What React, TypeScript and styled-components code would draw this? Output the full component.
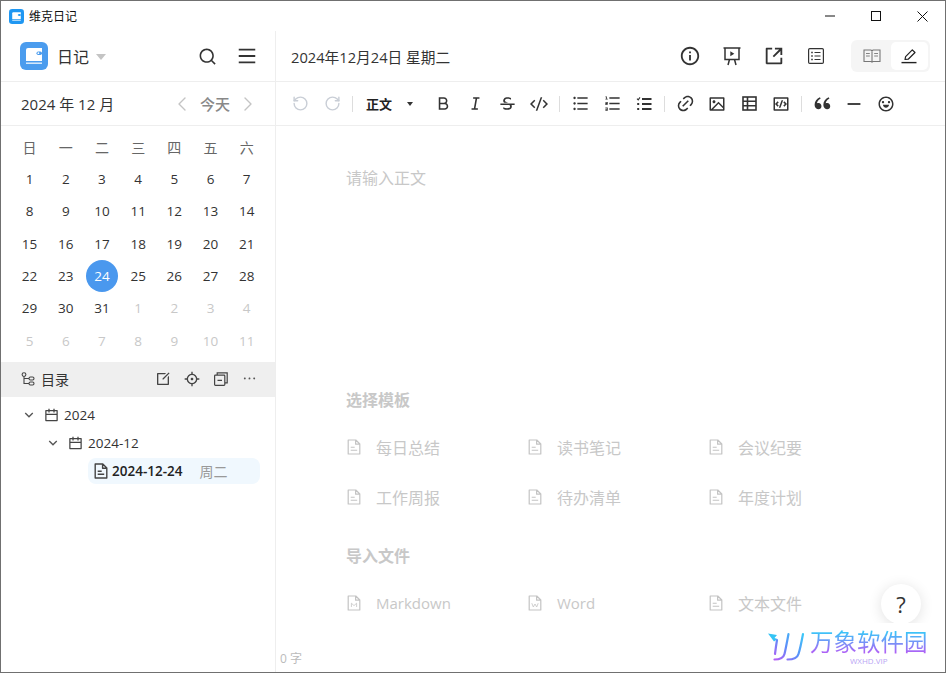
import React from "react"
import styled, { createGlobalStyle } from "styled-components"
import { RotateCcw, RotateCw, ChevronLeft, ChevronRight } from "lucide-react"
import {
  RiBold, RiItalic, RiStrikethrough, RiCodeSSlashLine, RiListUnordered, RiListOrdered,
  RiLink, RiImageLine, RiCodeBoxLine, RiDoubleQuotesL, RiSubtractLine,
  RiEmotionLine, RiInformationLine, RiShareBoxLine, RiSearchLine, RiMenuLine, RiCalendarLine,
  RiEditBoxLine, RiFocus3Line, RiArrowDownSLine, RiMoreLine,
} from "react-icons/ri"

const GlobalStyle = createGlobalStyle`
  html, body {
    margin: 0;
    padding: 0;
    background: #fff;
    overflow: hidden;
  }
  body {
    font-family: "Open Sans", "Noto Sans CJK SC", sans-serif;
    color: #222;
  }
  * { box-sizing: border-box; }
`

const AppLogo = ({ size, fill }: { size: number; fill: string }) => (
  <svg width={size} height={size} viewBox="0 0 28 28">
    <rect width="28" height="28" rx="6" fill={fill} />
    <path d="M8 6h14v13H6V8a2 2 0 0 1 2-2z" fill="#fff" />
    <rect x="16.500" y="9.500" width="5.500" height="3.400" rx="1.700" fill={fill} />
    <circle cx="18.400" cy="11.200" r="0.900" fill="#fff" />
    <rect x="6" y="20.500" width="16" height="1.400" fill="#fff" opacity="0.85" />
  </svg>
)

const PresentIcon = () => (
  <svg width="20" height="20" viewBox="0 0 20 20" fill="none" stroke="#333" strokeWidth="1.5">
    <path d="M1.500 2h17M3 2v11.500h14V2M7.500 13.500 6 19M12.500 13.500 14 19" />
    <path d="M8.300 5.200v5l4-2.500z" fill="#333" stroke="none" />
  </svg>
)

const ListBoxIcon = () => (
  <svg width="18" height="18" viewBox="0 0 18 18" fill="none" stroke="#333" strokeWidth="1.2">
    <rect x="1.600" y="1.600" width="14.800" height="14.800" rx="1.200" />
    <path d="M7.500 5.500h6M7.500 9h6M7.500 12.500h6" />
    <path d="M4.200 5.500h1.600M4.200 9h1.600M4.200 12.500h1.600" strokeWidth="1.500" />
  </svg>
)

const BookIcon = () => (
  <svg width="18" height="18" viewBox="0 0 18 18" fill="none" stroke="#777" strokeWidth="1.100">
    <path d="M1 3h7l1 1 1-1h7v11.500h-7l-1 .6-1-.6H1zM9 4v11" />
    <path d="M3 6.500h3.800M3 9h3.800M11.200 6.500H15M11.200 9H15" strokeWidth="0.9" />
  </svg>
)

const PenIcon = () => (
  <svg width="18" height="18" viewBox="0 0 18 18" fill="none" stroke="#222" strokeWidth="1.200">
    <path d="M5 12.500 5.600 9.600 12.300 2.800 15 5.500 8.200 12.200z" strokeLinejoin="round" />
    <path d="M1.500 15.600h15" strokeWidth="1.400" />
  </svg>
)

const TaskIcon = () => (
  <svg width="16" height="16" viewBox="0 0 16 16" fill="none" stroke="#333" strokeWidth="1.800">
    <path d="M6 3h9.500M6 8h9.500M6 13h9.500" />
    <path d="M1 2.600 2.200 3.800 4 1.400" strokeWidth="1.100" />
    <path d="M1.200 8h2M1.200 13h2" strokeWidth="2.200" />
  </svg>
)

const TableIcon = () => (
  <svg width="15" height="15" viewBox="0 0 15 15" fill="none" stroke="#333" strokeWidth="1.600">
    <rect x="1" y="1" width="13" height="13" />
    <path d="M1 5.300h13M1 9.700h13M5.500 1v13" />
  </svg>
)

const TreeIcon = () => (
  <svg width="14" height="14" viewBox="0 0 14 14" fill="none" stroke="#444" strokeWidth="1.100">
    <circle cx="3" cy="2.600" r="1.900" />
    <rect x="8" y="5" width="5" height="3" rx="1.400" />
    <rect x="8" y="10" width="5" height="3" rx="1.400" />
    <path d="M3 4.500v7h5M3 6.500h5" />
  </svg>
)

const CollapseIcon = () => (
  <svg width="16" height="16" viewBox="0 0 16 16" fill="none" stroke="#444" strokeWidth="1.200">
    <rect x="1.600" y="4.200" width="10.200" height="10.200" rx="0.8" />
    <path d="M4.200 4V1.800h10v10H12M4.500 9.300h4.500" />
  </svg>
)

const DocIcon = ({ mark, bold }: { mark?: string; bold?: boolean }) => (
  <svg width="14" height="16" viewBox="0 0 14 16" fill="none" stroke={bold ? "#444" : "#c4c4c4"} strokeWidth={bold ? 1.400 : 1.200}>
    <path d="M1.200 1h7.600l4 4v10H1.200zM8.600 1v4.200h4.200" strokeLinejoin="round" />
    {mark === "M" && <path d="M4.400 12V8.200L7 10.600l2.600-2.400V12" strokeWidth="0.8" />}
    {mark === "W" && <path d="M3.800 8.200 5.300 12 7 9l1.700 3 1.500-3.800" strokeWidth="0.8" />}
    {!mark && <path d="M3.700 8.200h4M3.700 11.200h6.500" strokeWidth={bold ? 1.600 : 1.100} />}
  </svg>
)

const WLogo = () => (
  <svg width="38" height="30" viewBox="0 0 38 30" fill="none">
    <defs>
      <linearGradient id="wGrad" x1="1" y1="0" x2="0" y2="1">
        <stop offset="0" stopColor="#3cc8f8" />
        <stop offset="0.55" stopColor="#5d8cf8" />
        <stop offset="1" stopColor="#b65cf6" />
      </linearGradient>
    </defs>
    <path d="M0 1.500 9 3 6.500 6 9.500 7 6 9.500z" fill="#35c4f5" />
    <path d="M9 8c-1 6-1.500 10-2 14M20.500 2c-1.500 8-3 16-4 20-.8 3-4 5.500-10 5.500M35 2c-1.500 8-3.500 17-4.500 20-1 3.500-5 5.500-11 5.500" stroke="url(#wGrad)" strokeWidth="2.200" strokeLinecap="round" />
  </svg>
)

const days = [
  ...Array.from({ length: 31 }, (_, i) => ({ label: i + 1, muted: false })),
  ...Array.from({ length: 11 }, (_, i) => ({ label: i + 1, muted: true })),
]

const templates = ["每日总结", "读书笔记", "会议纪要", "工作周报", "待办清单", "年度计划"]

export default function App() {
  return (
    <Window>
      <GlobalStyle />
      <TitleBar>
        <TitleLeft>
          <AppLogo size={15} fill="#1f97f2" />
          <TitleText>维克日记</TitleText>
        </TitleLeft>
        <WindowButtons>
          <WindowButton>
            <svg width="10" height="10" viewBox="0 0 10 10" stroke="#111" strokeWidth="1"><path d="M0 5h10" /></svg>
          </WindowButton>
          <WindowButton>
            <svg width="10" height="10" viewBox="0 0 10 10" fill="none" stroke="#111" strokeWidth="1"><rect x="0.5" y="0.5" width="9" height="9" /></svg>
          </WindowButton>
          <WindowButton>
            <svg width="11" height="11" viewBox="0 0 11 11" stroke="#111" strokeWidth="1"><path d="M.5.5l10 10M10.500.5l-10 10" /></svg>
          </WindowButton>
        </WindowButtons>
      </TitleBar>

      <Body>
        <Sidebar>
          <SideHeader>
            <AppLogo size={28} fill="#4b9cee" />
            <NotebookName>日记</NotebookName>
            <Caret />
            <SideHeaderIcons>
              <RiSearchLine size={19} color="#333" />
              <RiMenuLine size={22} color="#333" />
            </SideHeaderIcons>
          </SideHeader>

          <MonthRow>
            <MonthLabel>2024 年 12 月</MonthLabel>
            <MonthNav>
              <ChevronLeft size={24} color="#c4c4c4" strokeWidth={1.400} />
              <TodayLabel>今天</TodayLabel>
              <ChevronRight size={24} color="#c4c4c4" strokeWidth={1.400} />
            </MonthNav>
          </MonthRow>

          <CalendarGrid>
            {["日", "一", "二", "三", "四", "五", "六"].map((d) => (
              <WeekCell key={d}>{d}</WeekCell>
            ))}
            {days.map((d, i) => (
              <DayCell key={i} $muted={d.muted}>
                {!d.muted && d.label === 24 ? <SelectedDay>{d.label}</SelectedDay> : d.label}
              </DayCell>
            ))}
          </CalendarGrid>

          <TreeBar>
            <TreeIcon />
            <TreeBarTitle>目录</TreeBarTitle>
            <TreeBarIcons>
              <RiEditBoxLine size={16} color="#444" />
              <RiFocus3Line size={16} color="#444" />
              <CollapseIcon />
              <RiMoreLine size={15} color="#555" />
            </TreeBarIcons>
          </TreeBar>

          <Tree>
            <TreeRow $indent={20}>
              <RiArrowDownSLine size={16} color="#555" />
              <RiCalendarLine size={15} color="#444" />
              <span>2024</span>
            </TreeRow>
            <TreeRow $indent={44}>
              <RiArrowDownSLine size={16} color="#555" />
              <RiCalendarLine size={15} color="#444" />
              <span>2024-12</span>
            </TreeRow>
            <SelectedRow>
              <DocIcon bold />
              <SelectedName>2024-12-24</SelectedName>
              <WeekdayTag>周二</WeekdayTag>
            </SelectedRow>
          </Tree>
        </Sidebar>

        <Main>
          <MainHeader>
            <DateTitle>2024年12月24日 星期二</DateTitle>
            <HeaderIcons>
              <HeaderIcon><RiInformationLine size={22} color="#333" /></HeaderIcon>
              <HeaderIcon><PresentIcon /></HeaderIcon>
              <HeaderIcon><RiShareBoxLine size={22} color="#333" /></HeaderIcon>
              <HeaderIcon><ListBoxIcon /></HeaderIcon>
            </HeaderIcons>
            <ModeToggle>
              <ModeButton><BookIcon /></ModeButton>
              <ModeButton $active><PenIcon /></ModeButton>
            </ModeToggle>
          </MainHeader>

          <Toolbar>
            <ToolButton><RotateCcw size={17} color="#c9ced6" strokeWidth={2} /></ToolButton>
            <ToolButton><RotateCw size={17} color="#c9ced6" strokeWidth={2} /></ToolButton>
            <ToolSeparator />
            <BlockSelect>
              正文
              <SmallCaret />
            </BlockSelect>
            <ToolButton><RiBold size={19} color="#333" /></ToolButton>
            <ToolButton><RiItalic size={19} color="#333" /></ToolButton>
            <ToolButton><RiStrikethrough size={19} color="#333" /></ToolButton>
            <ToolButton><RiCodeSSlashLine size={18} color="#333" /></ToolButton>
            <ToolSeparator />
            <ToolButton><RiListUnordered size={19} color="#333" /></ToolButton>
            <ToolButton><RiListOrdered size={19} color="#333" /></ToolButton>
            <ToolButton><TaskIcon /></ToolButton>
            <ToolSeparator />
            <ToolButton><RiLink size={19} color="#333" /></ToolButton>
            <ToolButton><RiImageLine size={18} color="#333" /></ToolButton>
            <ToolButton><TableIcon /></ToolButton>
            <ToolButton><RiCodeBoxLine size={18} color="#333" /></ToolButton>
            <ToolSeparator />
            <ToolButton><RiDoubleQuotesL size={21} color="#333" /></ToolButton>
            <ToolButton><RiSubtractLine size={22} color="#333" /></ToolButton>
            <ToolButton><RiEmotionLine size={18} color="#333" /></ToolButton>
          </Toolbar>

          <Editor>
            <Placeholder>请输入正文</Placeholder>
            <SectionTitle>选择模板</SectionTitle>
            <OptionGrid>
              {templates.map((t) => (
                <OptionItem key={t}>
                  <DocIcon />
                  <span>{t}</span>
                </OptionItem>
              ))}
            </OptionGrid>
            <ImportTitle>导入文件</ImportTitle>
            <OptionGrid>
              <OptionItem><DocIcon mark="M" /><LatinLabel>Markdown</LatinLabel></OptionItem>
              <OptionItem><DocIcon mark="W" /><LatinLabel>Word</LatinLabel></OptionItem>
              <OptionItem><DocIcon /><span>文本文件</span></OptionItem>
            </OptionGrid>
          </Editor>
          <WordCount>0 字</WordCount>
        </Main>
      </Body>

      <HelpButton>?</HelpButton>
      <Watermark>
        <WLogo />
        <WatermarkText>
          <WatermarkName>万象软件园</WatermarkName>
          <WatermarkUrl>WXHD.VIP</WatermarkUrl>
        </WatermarkText>
      </Watermark>
    </Window>
  )
}

const Window = styled.div`
  position: relative;
  width: 946px;
  height: 673px;
  border: 1px solid #707070;
  background: #fff;
  display: flex;
  flex-direction: column;
  overflow: hidden;
`

const TitleBar = styled.div`
  height: 30px;
  flex: none;
  display: flex;
  align-items: center;
  justify-content: space-between;
`

const TitleLeft = styled.div`
  display: flex;
  align-items: center;
  gap: 5px;
  padding-left: 8px;
`

const TitleText = styled.span`
  font-size: 12px;
  color: #111;
`

const WindowButtons = styled.div`
  display: flex;
`

const WindowButton = styled.div`
  width: 46px;
  height: 30px;
  display: flex;
  align-items: center;
  justify-content: center;
`

const Body = styled.div`
  flex: 1;
  display: flex;
  min-height: 0;
`

const Sidebar = styled.aside`
  width: 275px;
  flex: none;
  border-right: 1px solid #eee;
  display: flex;
  flex-direction: column;
`

const SideHeader = styled.div`
  height: 51px;
  flex: none;
  display: flex;
  align-items: center;
  padding: 0 10px 0 19px;
  border-bottom: 1px solid #eee;
`

const NotebookName = styled.span`
  font-size: 16px;
  margin-left: 9px;
  color: #333;
`

const Caret = styled.span`
  width: 0;
  height: 0;
  margin-left: 7px;
  margin-top: 2px;
  border-left: 5px solid transparent;
  border-right: 5px solid transparent;
  border-top: 6px solid #c4c4c4;
`

const SideHeaderIcons = styled.div`
  margin-left: auto;
  display: flex;
  align-items: center;
  gap: 19px;
  padding-right: 7px;
`

const MonthRow = styled.div`
  height: 44px;
  flex: none;
  display: flex;
  align-items: center;
  justify-content: space-between;
  padding: 0 15px 0 20px;
  border-bottom: 1px solid #eee;
`

const MonthLabel = styled.span`
  font-size: 15px;
  color: #333;
`

const MonthNav = styled.div`
  display: flex;
  align-items: center;
`

const TodayLabel = styled.span`
  font-size: 15px;
  font-weight: 500;
  color: #888;
  margin: 0 6px;
`

const CalendarGrid = styled.div`
  display: grid;
  grid-template-columns: repeat(7, 36.2px);
  grid-auto-rows: 32.33px;
  padding: 4.6px 0 0 10.5px;
  flex: none;
  height: 236px;
`

const WeekCell = styled.div`
  display: flex;
  align-items: center;
  justify-content: center;
  font-size: 14px;
  color: #666;
`

const DayCell = styled.div<{ $muted: boolean }>`
  display: flex;
  align-items: center;
  justify-content: center;
  font-size: 13.5px;
  color: ${(p) => (p.$muted ? "#c8c8c8" : "#333")};
`

const SelectedDay = styled.span`
  width: 32px;
  height: 32px;
  border-radius: 50%;
  background: #4a98ee;
  color: #fff;
  display: flex;
  align-items: center;
  justify-content: center;
`

const TreeBar = styled.div`
  height: 35px;
  flex: none;
  background: #efefef;
  display: flex;
  align-items: center;
  padding: 0 18px 2px 20px;
`

const TreeBarTitle = styled.span`
  font-size: 14px;
  margin-left: 6px;
  color: #333;
`

const TreeBarIcons = styled.div`
  margin-left: auto;
  display: flex;
  align-items: center;
  gap: 13px;
`

const Tree = styled.div`
  padding-top: 4px;
  display: flex;
  flex-direction: column;
`

const TreeRow = styled.div<{ $indent: number }>`
  height: 28px;
  display: flex;
  align-items: center;
  gap: 5px;
  padding-left: ${(p) => p.$indent}px;
  font-size: 13.5px;
  color: #333;

  svg:first-child {
    margin-right: 2px;
  }
`

const SelectedRow = styled.div`
  height: 26px;
  margin: 1px 15px 0 87px;
  padding-left: 6px;
  border-radius: 8px;
  background: #f0f8fe;
  display: flex;
  align-items: center;
`

const SelectedName = styled.span`
  font-size: 13.5px;
  font-weight: 600;
  margin-left: 4px;
  color: #222;
`

const WeekdayTag = styled.span`
  font-size: 14px;
  color: #999;
  margin-left: 17px;
`

const Main = styled.main`
  flex: 1;
  min-width: 0;
  display: flex;
  flex-direction: column;
`

const MainHeader = styled.div`
  height: 51px;
  flex: none;
  display: flex;
  align-items: center;
  padding: 0 15px;
  border-bottom: 1px solid #eee;
`

const DateTitle = styled.span`
  font-size: 14.7px;
  color: #333;
`

const HeaderIcons = styled.div`
  margin-left: auto;
  display: flex;
  align-items: center;
  margin-right: 14px;
`

const HeaderIcon = styled.div`
  width: 42px;
  display: flex;
  justify-content: center;
`

const ModeToggle = styled.div`
  width: 79px;
  height: 32px;
  padding: 2px;
  border-radius: 6px;
  background: #f5f5f5;
  display: flex;
  justify-content: space-between;
`

const ModeButton = styled.div<{ $active?: boolean }>`
  width: 38px;
  border-radius: 5px;
  display: flex;
  align-items: center;
  justify-content: center;
  background: ${(p) => (p.$active ? "#fff" : "transparent")};
`

const Toolbar = styled.div`
  height: 44px;
  flex: none;
  display: flex;
  align-items: center;
  padding-left: 8px;
  border-bottom: 1px solid #eee;
`

const ToolButton = styled.div`
  width: 32px;
  height: 32px;
  display: flex;
  align-items: center;
  justify-content: center;
`

const ToolSeparator = styled.div`
  width: 1px;
  height: 16px;
  margin: 0 4px;
  background: #ddd;
`

const BlockSelect = styled.div`
  width: 70px;
  display: flex;
  align-items: center;
  padding-left: 9px;
  font-size: 13px;
  font-weight: 600;
  color: #222;
`

const SmallCaret = styled.span`
  width: 0;
  height: 0;
  margin-left: 15px;
  border-left: 3.5px solid transparent;
  border-right: 3.5px solid transparent;
  border-top: 4px solid #333;
`

const Editor = styled.div`
  flex: 1;
  padding: 41px 0 0 70px;
`

const Placeholder = styled.div`
  font-size: 16px;
  line-height: 22px;
  color: #c8c8c8;
`

const SectionTitle = styled.div`
  margin-top: 200px;
  font-size: 16px;
  font-weight: 700;
  line-height: 22px;
  color: #c8c8c8;
`

const ImportTitle = styled(SectionTitle)`
  margin-top: 23px;
`

const OptionGrid = styled.div`
  display: grid;
  grid-template-columns: repeat(3, 181px);
  grid-auto-rows: 50px;
  padding-top: 11px;
`

const OptionItem = styled.div`
  display: flex;
  align-items: center;
  gap: 15px;
  font-size: 16px;
  color: #c8c8c8;
  padding-left: 1px;
`

const LatinLabel = styled.span`
  font-size: 15px;
`

const WordCount = styled.div`
  padding: 0 0 5px 4px;
  font-size: 12px;
  color: #bbb;
`

const HelpButton = styled.div`
  position: absolute;
  left: 880px;
  top: 583px;
  width: 40px;
  height: 40px;
  border-radius: 50%;
  background: #fff;
  box-shadow: 0 2px 14px rgba(0, 0, 0, 0.12);
  display: flex;
  align-items: center;
  justify-content: center;
  font-size: 22px;
  color: #333;
`

const Watermark = styled.div`
  position: absolute;
  right: -1px;
  bottom: -1px;
  width: 200px;
  height: 50px;
  background: #fff;
  display: flex;
  align-items: flex-start;
  padding: 7px 0 0 22px;
  gap: 4px;

  svg {
    margin-top: 2px;
  }
`

const WatermarkText = styled.div`
  display: flex;
  flex-direction: column;
  align-items: center;
`

const WatermarkName = styled.div`
  font-size: 23.5px;
  line-height: 24px;
  background: linear-gradient(180deg, #3cc4f8 10%, #b060f6 95%);
  -webkit-background-clip: text;
  background-clip: text;
  color: transparent;
`

const WatermarkUrl = styled.div`
  font-size: 8px;
  line-height: 9px;
  margin-top: 2px;
  color: #b9a6f4;
`
